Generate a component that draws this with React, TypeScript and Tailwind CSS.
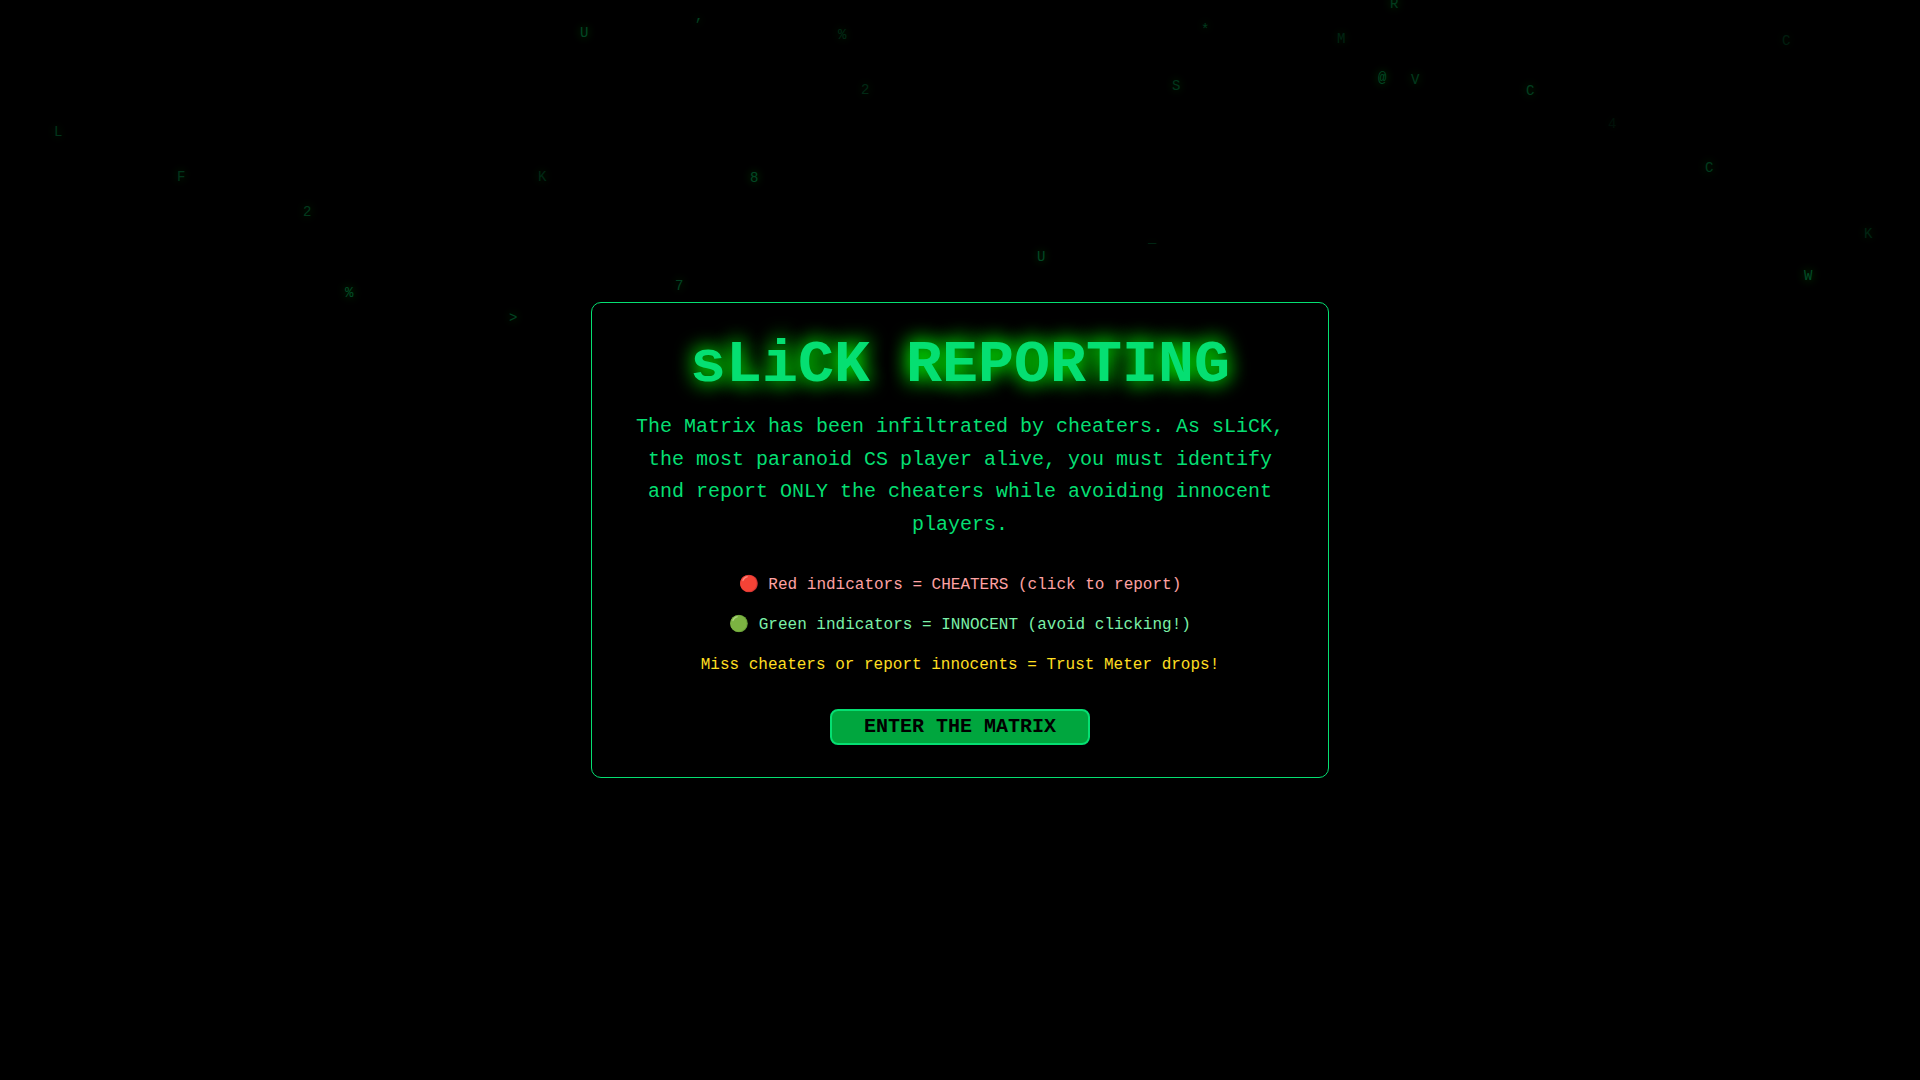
interface Drop {
  char: string
  x: number
  y: number
  opacity: number
}

// x is measured on a 1920 wide screen, y is in pixels from the top
const DROPS: Drop[] = [
  { char: 'L', x: 54,   y: 122, opacity: 0.24 },
  { char: 'F', x: 177,  y: 167, opacity: 0.24 },
  { char: '2', x: 303,  y: 202, opacity: 0.26 },
  { char: '%', x: 345,  y: 283, opacity: 0.34 },
  { char: '>', x: 509,  y: 308, opacity: 0.3 },
  { char: 'K', x: 538,  y: 167, opacity: 0.18 },
  { char: 'U', x: 580,  y: 23,  opacity: 0.32 },
  { char: '7', x: 675,  y: 276, opacity: 0.3 },
  { char: ',', x: 695,  y: 6,   opacity: 0.3 },
  { char: '8', x: 750,  y: 168, opacity: 0.32 },
  { char: '%', x: 838,  y: 25,  opacity: 0.18 },
  { char: '2', x: 861,  y: 80,  opacity: 0.18 },
  { char: 'U', x: 1037, y: 247, opacity: 0.32 },
  { char: '_', x: 1148, y: 228, opacity: 0.28 },
  { char: 'S', x: 1172, y: 76,  opacity: 0.24 },
  { char: '*', x: 1201, y: 20,  opacity: 0.26 },
  { char: 'M', x: 1337, y: 29,  opacity: 0.16 },
  { char: '@', x: 1378, y: 68,  opacity: 0.32 },
  { char: 'R', x: 1390, y: -6,  opacity: 0.26 },
  { char: 'V', x: 1411, y: 70,  opacity: 0.26 },
  { char: 'C', x: 1526, y: 81,  opacity: 0.28 },
  { char: '4', x: 1608, y: 114, opacity: 0.07 },
  { char: 'C', x: 1705, y: 158, opacity: 0.26 },
  { char: 'C', x: 1782, y: 31,  opacity: 0.13 },
  { char: 'W', x: 1804, y: 266, opacity: 0.34 },
  { char: 'K', x: 1864, y: 224, opacity: 0.16 },
]

function MatrixRain() {
  return (
    <div className="pointer-events-none absolute inset-0 overflow-hidden" aria-hidden="true">
      {DROPS.map((d, i) => (
        <span key={i}
          className="absolute text-sm text-green-400 [text-shadow:0_0_10px_#00ff00]"
          style={{ left: `${(d.x / 1920) * 100}%`, top: d.y, opacity: d.opacity }}>
          {d.char}
        </span>
      ))}
    </div>
  )
}

export default function App() {
  return (
    <div className="relative min-h-screen overflow-hidden bg-black text-green-400
                    font-['Liberation_Mono',monospace]">
      <MatrixRain />

      <main className="relative flex min-h-screen items-center justify-center">
        <div className="rounded-[10px] border border-green-400 bg-black/90 p-8 text-center">
          <div className="max-w-2xl">
            <h1 className="mb-4 text-6xl font-bold [text-shadow:0_0_20px_#00ff00,0_0_20px_#00ff0080]">
              sLiCK REPORTING
            </h1>
            <p className="mb-8 text-xl leading-relaxed">
              The Matrix has been infiltrated by cheaters. As sLiCK, the most paranoid CS
              player alive, you must identify and report ONLY the cheaters while avoiding
              innocent players.
            </p>

            {/* Rules */}
            <div className="mb-8 space-y-4">
              <p className="text-red-300">🔴 Red indicators = CHEATERS (click to report)</p>
              <p className="text-green-300">🟢 Green indicators = INNOCENT (avoid clicking!)</p>
              <p className="text-yellow-300">Miss cheaters or report innocents = Trust Meter drops!</p>
            </div>

            <button type="button"
              className="inline-flex h-9 items-center justify-center rounded-lg border-2 border-green-400
                         bg-green-600 px-8 align-top text-xl font-bold text-black hover:bg-green-500">
              ENTER THE MATRIX
            </button>
          </div>
        </div>
      </main>
    </div>
  )
}
